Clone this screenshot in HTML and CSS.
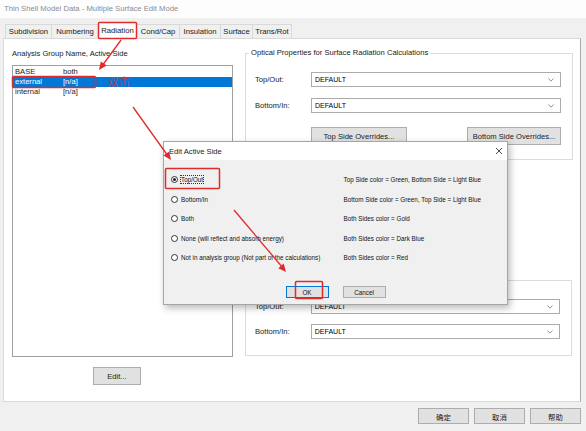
FILE: index.html
```html
<!DOCTYPE html>
<html>
<head>
<meta charset="utf-8">
<link rel="stylesheet" href="styles.css">
</head>
<body>
<div class="window">
  <div class="titlebar">Thin Shell Model Data - Multiple Surface Edit Mode</div>
  <div class="tabs">
    <div class="tab w1">Subdivision</div>
    <div class="tab w2">Numbering</div>
    <div class="tab w3 active">Radiation</div>
    <div class="tab w4">Cond/Cap</div>
    <div class="tab w5">Insulation</div>
    <div class="tab w6">Surface</div>
    <div class="tab w7 last">Trans/Rot</div>
  </div>
  <div class="page">
    <div class="leftcol">
      <div class="lbl">Analysis Group Name, Active Side</div>
      <div class="list">
        <div class="row"><span class="c1">BASE</span><span>both</span></div>
        <div class="row sel"><span class="c1">external</span><span>[n/a]</span></div>
        <div class="row"><span class="c1">internal</span><span>[n/a]</span></div>
      </div>
      <button class="btn edit">Edit...</button>
    </div>
    <div class="rightcol">
      <fieldset class="grp g1">
        <legend>Optical Properties for Surface Radiation Calculations</legend>
        <div class="frow"><span class="flbl">Top/Out:</span><div class="combo"><span>DEFAULT</span><svg class="arr" width="6" height="4" viewBox="0 0 6 4"><polyline points="0.5,0.5 3,3.2 5.5,0.5" fill="none" stroke="#777" stroke-width="0.8"/></svg></div></div>
        <div class="frow r2"><span class="flbl">Bottom/In:</span><div class="combo"><span>DEFAULT</span><svg class="arr" width="6" height="4" viewBox="0 0 6 4"><polyline points="0.5,0.5 3,3.2 5.5,0.5" fill="none" stroke="#777" stroke-width="0.8"/></svg></div></div>
        <div class="brow"><button class="btn ov1">Top Side Overrides...</button><button class="btn ov2">Bottom Side Overrides...</button></div>
      </fieldset>
      <div class="grp g2">
        <div class="frow"><span class="flbl">Top/Out:</span><div class="combo"><span>DEFAULT</span><svg class="arr" width="6" height="4" viewBox="0 0 6 4"><polyline points="0.5,0.5 3,3.2 5.5,0.5" fill="none" stroke="#777" stroke-width="0.8"/></svg></div></div>
        <div class="frow r2b"><span class="flbl">Bottom/In:</span><div class="combo"><span>DEFAULT</span><svg class="arr" width="6" height="4" viewBox="0 0 6 4"><polyline points="0.5,0.5 3,3.2 5.5,0.5" fill="none" stroke="#777" stroke-width="0.8"/></svg></div></div>
      </div>
    </div>
  </div>
  <div class="footer">
    <button class="btn fb">确定</button>
    <button class="btn fb">取消</button>
    <button class="btn fb">帮助</button>
  </div>
</div>

<div class="dialog">
  <div class="dtitle"><span>Edit Active Side</span><svg width="8" height="8" viewBox="0 0 8 8"><path d="M1 1 L7 7 M7 1 L1 7" stroke="#333" stroke-width="0.9"/></svg></div>
  <div class="dbody">
    <div class="opt"><span class="radio on"></span><span class="focus">Top/Out</span></div>
    <div class="desc">Top Side color = Green, Bottom Side = Light Blue</div>
    <div class="opt"><span class="radio"></span><span>Bottom/In</span></div>
    <div class="desc">Bottom Side color = Green, Top Side = Light Blue</div>
    <div class="opt"><span class="radio"></span><span>Both</span></div>
    <div class="desc">Both Sides color = Gold</div>
    <div class="opt"><span class="radio"></span><span>None (will reflect and absorb energy)</span></div>
    <div class="desc">Both Sides color = Dark Blue</div>
    <div class="opt"><span class="radio"></span><span>Not in analysis group (Not part of the calculations)</span></div>
    <div class="desc">Both Sides color = Red</div>
  </div>
  <div class="dbtns">
    <button class="btn dbtn ok">OK</button>
    <button class="btn dbtn">Cancel</button>
  </div>
</div>

<span class="note">双击</span>
<svg class="annot" width="586" height="431" viewBox="0 0 586 431">
  <g fill="none" stroke="#e02b2b" stroke-width="1.5">
    <rect x="98.5" y="22.5" width="38" height="16" rx="1"/>
    <rect x="12.5" y="76.5" width="83" height="11" rx="1"/>
    <rect x="165.5" y="168.5" width="54" height="20" rx="1"/>
    <rect x="295.5" y="281.5" width="27" height="17" rx="1"/>
  </g>
  <g stroke="#e02b2b" stroke-width="1.3" fill="none">
    <line x1="121" y1="40" x2="102" y2="66"/>
    <line x1="133" y1="107" x2="168" y2="156"/>
    <line x1="234" y1="210" x2="283" y2="268"/>
  </g>
  <g fill="#e02b2b">
    <polygon points="99,70 106.6,65.6 100.8,61.4"/>
    <polygon points="171,160 163.4,155.6 169.2,151.4"/>
    <polygon points="286,272 278.3,268.2 283.7,263.6"/>
  </g>
</svg>
</body>
</html>
```

FILE: styles.css
```css
html, body {
  margin: 0;
  padding: 0;
}
body {
  width: 586px;
  height: 431px;
  background: #f0f0f0;
  font-family: "Liberation Sans", Arial, "Noto Sans CJK SC", sans-serif;
  color: #1a1a1a;
  position: relative;
  overflow: hidden;
}
.window {
  width: 586px;
  height: 431px;
  display: flex;
  flex-direction: column;
}
.titlebar {
  height: 18px;
  line-height: 17px;
  background: #fdfdfd;
  padding-left: 4px;
  font-size: 7.7px;
  color: #8c8c8c;
}
.tabs {
  display: flex;
  margin-top: 6px;
  padding-left: 5px;
  height: 14px;
}
.tab {
  box-sizing: border-box;
  height: 14px;
  border: 1px solid #d9d9d9;
  border-right: none;
  border-bottom: none;
  background: #f0f0f0;
  font-size: 7.7px;
  line-height: 13px;
  text-align: center;
  white-space: nowrap;
}
.tab.last { border-right: 1px solid #d9d9d9; }
.tab.active {
  background: #fff;
  margin-top: -2px;
  height: 17px;
  border-right: 1px solid #d9d9d9;
  position: relative;
  z-index: 2;
  line-height: 15px;
}
.tab.active + .tab { border-left: none; }
.w1 { width: 46px; }
.w2 { width: 47px; }
.w3 { width: 39px; }
.w4 { width: 42px; }
.w5 { width: 41px; }
.w6 { width: 32px; }
.w7 { width: 40px; }

.page {
  box-sizing: border-box;
  margin-left: 3px;
  width: 578px;
  height: 364px;
  background: #fff;
  border: 1px solid #d9d9d9;
  border-right-color: #a8a8a8;
  display: flex;
  font-size: 7.6px;
}
.leftcol {
  padding-left: 8px;
  padding-top: 10px;
  width: 221px;
  display: flex;
  flex-direction: column;
}
.lbl {
  height: 9px;
  line-height: 9px;
  white-space: nowrap;
}
.list {
  box-sizing: border-box;
  margin-top: 7px;
  width: 221px;
  height: 292px;
  border: 1px solid #a0a0a0;
  padding-top: 1px;
}
.row {
  display: flex;
  height: 10px;
  line-height: 10px;
  padding-left: 2px;
}
.row .c1 { width: 48px; }
.row.sel { background: #0078d7; color: #fff; }

.btn {
  box-sizing: border-box;
  font-family: "Liberation Sans", Arial, "Noto Sans CJK SC", sans-serif;
  font-size: 7.6px;
  color: #1a1a1a;
  background: #e1e1e1;
  border: 1px solid #adadad;
  padding: 0;
  margin: 0;
}
.edit {
  margin-top: 10px;
  margin-left: 81px;
  width: 48px;
  height: 18px;
}

.rightcol {
  margin-left: 12px;
  width: 327px;
  display: flex;
  flex-direction: column;
}
.grp {
  box-sizing: border-box;
  width: 327px;
  border: 1px solid #dcdcdc;
  margin: 0;
}
.g1 {
  margin-top: 9px;
  padding: 14px 11px 14px 9px;
}
.g1 legend {
  margin-left: -6px;
  padding: 0 2px;
  line-height: 10px;
  font-size: 7.6px;
  white-space: nowrap;
}
.frow {
  display: flex;
  align-items: center;
  height: 15px;
}
.frow.r2 { margin-top: 11px; }
.frow.r2b { margin-top: 10px; }
.flbl { width: 56px; }
.combo {
  box-sizing: border-box;
  width: 250px;
  height: 15px;
  border: 1px solid #ababab;
  background: #fff;
  display: flex;
  align-items: center;
  justify-content: space-between;
  padding: 0 6px 0 3px;
  font-size: 7px;
  color: #000;
}
.brow {
  display: flex;
  justify-content: space-between;
  margin-left: 56px;
  margin-top: 14px;
}
.ov1 { width: 96px; height: 18px; }
.ov2 { width: 94px; height: 18px; }
.g2 {
  margin-top: 120px;
  padding: 18px 11px 16px 9px;
}

.footer {
  margin-top: 6px;
  display: flex;
  justify-content: flex-end;
  gap: 5px;
  padding-right: 5px;
}
.fb {
  width: 51px;
  height: 16px;
  font-family: "Noto Sans CJK SC", sans-serif;
  font-size: 7.4px;
}

.dialog {
  position: absolute;
  left: 163px;
  top: 141px;
  width: 345px;
  height: 164px;
  box-sizing: border-box;
  border: 1px solid #a6a6a6;
  background: #f0f0f0;
  box-shadow: 2px 3px 7px rgba(0, 0, 0, 0.28);
  z-index: 5;
}
.dtitle {
  height: 18px;
  background: #fff;
  display: flex;
  align-items: center;
  justify-content: space-between;
  padding: 0 4px 0 5px;
  font-size: 7.6px;
  color: #1a1a1a;
}
.dbody {
  display: grid;
  grid-template-columns: 173px auto;
  grid-auto-rows: 19.5px;
  align-items: center;
  padding: 10px 0 0 6.5px;
  font-size: 6.3px;
  color: #111;
}
.opt {
  display: flex;
  align-items: center;
  white-space: nowrap;
}
.desc { white-space: nowrap; }
.radio {
  box-sizing: border-box;
  width: 7px;
  height: 7px;
  border: 0.8px solid #333;
  border-radius: 50%;
  background: #fff;
  margin-right: 3.5px;
  display: flex;
  align-items: center;
  justify-content: center;
}
.radio.on::after {
  content: "";
  width: 3px;
  height: 3px;
  border-radius: 50%;
  background: #222;
}
.focus {
  outline: 0.6px dotted #333;
}
.dbtns {
  display: flex;
  justify-content: center;
  gap: 14px;
  margin-top: 18.5px;
}
.dbtn {
  width: 43px;
  height: 12px;
  font-size: 6.3px;
  color: #111;
}
.dbtn.ok {
  border-color: #0078d7;
}

.note {
  position: absolute;
  left: 107px;
  top: 75px;
  font-family: "Noto Sans CJK SC", sans-serif;
  font-size: 11.5px;
  font-weight: 300;
  line-height: 13px;
  color: #e02b2b;
  z-index: 6;
}
.annot {
  position: absolute;
  left: 0;
  top: 0;
  z-index: 7;
  pointer-events: none;
}
```
